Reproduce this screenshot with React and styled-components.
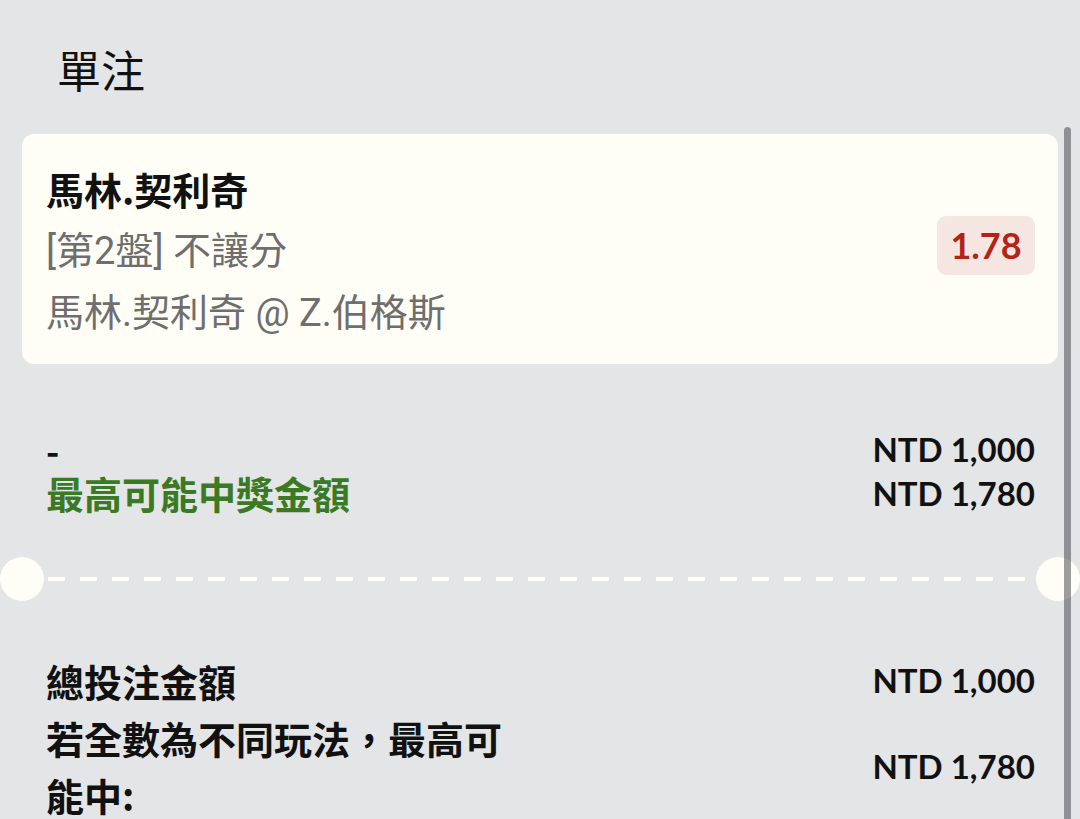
import React from "react";
import styled, { createGlobalStyle } from "styled-components";

const Global = createGlobalStyle`
  html, body { margin: 0; padding: 0; background: #e4e5e7; }
  body { font-family: "Noto Sans CJK TC", "Noto Sans", sans-serif; color: #111; }
  * { box-sizing: border-box; }
`;

const Page = styled.div`
  position: relative;
  min-height: 819px;
  padding: 0 22px;
  overflow: hidden;
`;

const Title = styled.h1`
  margin: 0;
  padding: 39px 0 0 35px;
  height: 134px;
  font-size: 44px;
  line-height: 60px;
  font-weight: 400;
  color: #111;
`;

const Card = styled.div`
  display: flex;
  align-items: center;
  justify-content: space-between;
  background: #fffef6;
  border-radius: 12px;
  padding: 24px 23px 20px 24px;
  height: 230px;
`;

const Info = styled.div`
  display: flex;
  flex-direction: column;
`;

const Line = styled.div`
  font-family: ${(p) =>
    p.$muted ? `Roboto, "Noto Sans CJK TC", sans-serif` : `"Noto Sans CJK TC", sans-serif`};
  font-size: 38px;
  line-height: 62px;
  font-weight: ${(p) => (p.$bold ? 700 : 400)};
  color: ${(p) => (p.$muted ? "#6e6e6e" : "#111")};
  white-space: nowrap;
`;

const Odds = styled.div`
  background: #f6e6e1;
  color: #b42318;
  border-radius: 9px;
  width: 98px;
  height: 59px;
  display: flex;
  align-items: center;
  justify-content: center;
  font-family: Lato, "Noto Sans", sans-serif;
  font-weight: 700;
  font-size: 36px;
  margin-bottom: 12px;
`;

const Summary = styled.div`
  display: grid;
  grid-template-columns: ${(p) => p.$left || "1fr"} 1fr;
  align-items: center;
  padding: 0 23px 0 24px;
  margin-top: ${(p) => p.$top}px;
`;

const Label = styled.div`
  font-size: ${(p) => p.$size || 38}px;
  line-height: ${(p) => p.$lh || 57}px;
  font-weight: 700;
  color: ${(p) => (p.$green ? "#3a7a24" : "#111")};
`;

const Amount = styled.div`
  text-align: right;
  font-family: Lato, "Noto Sans", sans-serif;
  font-weight: 700;
  font-size: 33px;
  line-height: ${(p) => p.$lh || 57}px;
  color: #111;
  white-space: nowrap;
`;

const Divider = styled.div`
  display: flex;
  align-items: center;
  margin: 42px -22px 0;
  height: 44px;
`;

const Notch = styled.div`
  width: 44px;
  height: 44px;
  border-radius: 50%;
  background: #fffef6;
  flex: none;
`;

const Dashes = styled.div`
  flex: 1;
  height: 4px;
  margin: 0 2px 0 4px;
  background: repeating-linear-gradient(
    to right,
    #fffef6 0 17px,
    transparent 17px 32px
  );
`;

const Scrollbar = styled.div`
  position: absolute;
  top: 127px;
  right: 9px;
  bottom: 0;
  width: 7px;
  border-radius: 4px 4px 0 0;
  background: rgba(40, 40, 48, 0.45);
`;

export default function App() {
  return (
    <>
      <Global />
      <Page>
        <Title>單注</Title>
        <Card>
          <Info>
            <Line $bold>馬林.契利奇</Line>
            <Line $muted>[第2盤] 不讓分</Line>
            <Line $muted>馬林.契利奇 @ Z.伯格斯</Line>
          </Info>
          <Odds>1.78</Odds>
        </Card>

        <Summary $top={63}>
          <Label $lh={44} $size={36}>-</Label>
          <Amount $lh={44}>NTD 1,000</Amount>
          <Label $lh={44} $green>最高可能中獎金額</Label>
          <Amount $lh={44}>NTD 1,780</Amount>
        </Summary>

        <Divider>
          <Notch />
          <Dashes />
          <Notch />
        </Divider>

        <Summary $top={51} $left="470px">
          <Label>總投注金額</Label>
          <Amount>NTD 1,000</Amount>
          <Label>若全數為不同玩法，最高可能中:</Label>
          <Amount>NTD 1,780</Amount>
        </Summary>

        <Scrollbar />
      </Page>
    </>
  );
}
